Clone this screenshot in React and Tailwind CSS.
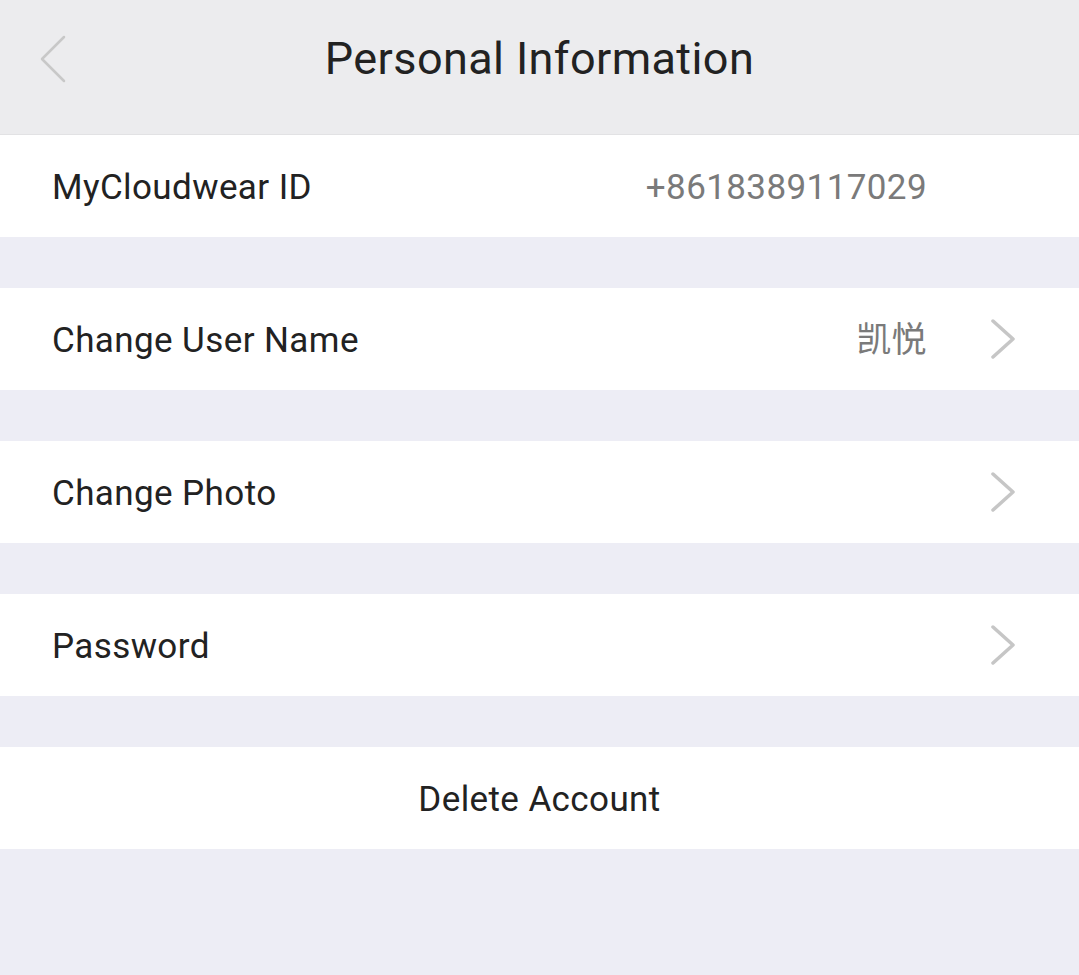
const font = { fontFamily: "Roboto, 'Noto Sans CJK SC', sans-serif" };

function Chevron() {
  return (
    <svg width="28" height="40" viewBox="0 0 28 40" className="shrink-0">
      <path d="M4 2 L24 20 L4 38" fill="none" stroke="#c6c6c6" strokeWidth="3.5" strokeLinecap="round" strokeLinejoin="round" />
    </svg>
  );
}

function Row({ label, value, chevron }) {
  return (
    <div className="h-[102px] bg-white flex items-center pl-[52px] pr-[62px] tracking-[0.4px]">
      <span className="text-[35px] text-[#222222] pt-[5px]">{label}</span>
      <div className="ml-auto flex items-center">
        {value && <span className="text-[35px] text-[#7a7a7a] pt-[5px]">{value}</span>}
        {chevron && <div className="ml-[62px]"><Chevron /></div>}
      </div>
    </div>
  );
}

function Gap() {
  return <div className="h-[51px] bg-[#ededf5]" />;
}

export default function App() {
  return (
    <div className="w-[1079px] min-h-[975px] bg-[#ededf5]" style={font}>
      {/* Header */}
      <div className="h-[135px] bg-[#ececee] border-b border-[#e2e2e4] relative flex items-center justify-center">
        <svg width="30" height="48" viewBox="0 0 30 48" className="absolute left-[38px] top-[35px]">
          <path d="M26 2 L4 24 L26 46" fill="none" stroke="#c8c8c8" strokeWidth="2.5" strokeLinecap="round" strokeLinejoin="round" />
        </svg>
        <h1 className="text-[45px] text-[#222222] tracking-[0.4px] -mt-[16px]">Personal Information</h1>
      </div>

      <div className="h-[102px] bg-white flex items-center pl-[52px] pr-[152px] tracking-[0.4px]">
        <span className="text-[35px] text-[#222222] pt-[5px]">MyCloudwear ID</span>
        <span className="ml-auto text-[35px] text-[#7a7a7a] pt-[5px]">+8618389117029</span>
      </div>
      <Gap />
      <Row label="Change User Name" value="凯悦" chevron />
      <Gap />
      <Row label="Change Photo" chevron />
      <Gap />
      <Row label="Password" chevron />
      <Gap />
      <div className="h-[102px] bg-white flex items-center justify-center tracking-[0.4px]">
        <span className="text-[35px] text-[#222222] pt-[5px]">Delete Account</span>
      </div>
    </div>
  );
}
